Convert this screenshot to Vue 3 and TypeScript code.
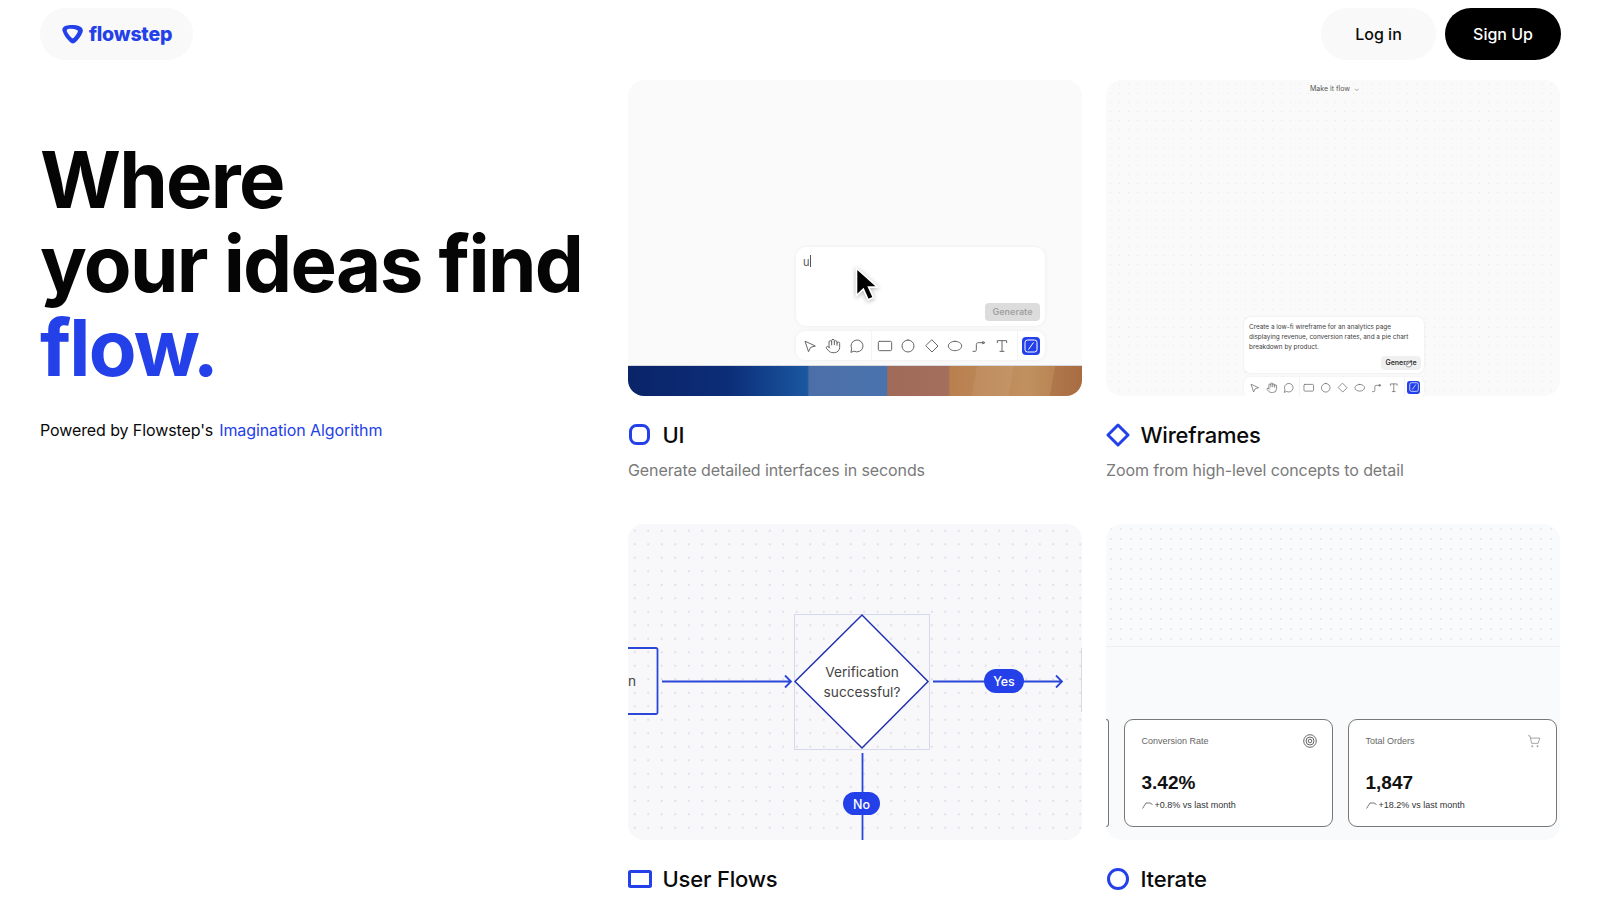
<script setup lang="ts">
const toolPaths: string[][] = [
  ["M5 5l15 7-7 2-3 6z"],
  [
    "M18 11V6a2 2 0 0 0-4 0",
    "M14 10V4a2 2 0 0 0-4 0v2",
    "M10 10.500V6a2 2 0 0 0-4 0v8",
    "M18 8a2 2 0 1 1 4 0v6a8 8 0 0 1-8 8h-2c-2.800 0-4.500-.86-6-2.340l-3.600-3.600a2 2 0 0 1 2.830-2.820L7 15",
  ],
  ["M7.900 20A9 9 0 1 0 4 16.100L3 21Z"],
];
const shapePaths: string[][] = [
  ["M4 5h16a2 2 0 0 1 2 2v10a2 2 0 0 1-2 2H4a2 2 0 0 1-2-2V7a2 2 0 0 1 2-2z"],
  ["M12 3a9 9 0 1 0 0 18a9 9 0 1 0 0-18z"],
  ["M12 3l9 9-9 9-9-9z"],
  ["M12 5c5.500 0 10 3.100 10 7s-4.500 7-10 7S2 15.900 2 12s4.500-7 10-7z"],
  ["M3 20h3c1.500 0 2-1 2-2.500V10c0-2 1-3 3-3h7", "M18 5.500l3 1.500-3 1.500z"],
  ["M5 7V4h14v3", "M12 4v16", "M9 20h6"],
];

const stats = [
  { label: "Conversion Rate", value: "3.42%", delta: "+0.8% vs last month", icon: "target" },
  { label: "Total Orders", value: "1,847", delta: "+18.2% vs last month", icon: "cart" },
];
</script>

<template>
  <div class="page">
    <header class="topbar">
      <a class="logo">
        <svg class="logo__mark" width="21" height="19" viewBox="0 0 21 19">
          <path
            fill-rule="evenodd"
            d="M4 .8C7.500-.2 14-.2 18 1.500c2.600 1.100 3.400 3.500 2.400 6-1.400 3.700-4 7.200-6.600 9.600-1.800 1.700-4 1.800-5.600.2C5 14.200 2 10.500.6 6-.2 3.500 1.300 1.500 4 .8ZM6 4c3-.6 6-.3 9 .9.900.4 1.100 1.200.7 2.100-1.100 2.400-2.600 4.500-4.200 6-.6.500-1.200.4-1.700-.1C8 11 6 9 4.900 6.400c-.4-1 0-2 1.100-2.400Z"
          />
        </svg>
        <span>flowstep</span>
      </a>
      <nav class="topbar__actions">
        <button class="btn btn_light">Log in</button>
        <button class="btn btn_dark">Sign Up</button>
      </nav>
    </header>

    <main class="layout">
      <section class="hero">
        <h1>Where<br />your ideas find<br /><em>flow.</em></h1>
        <p class="hero__sub">
          <span>Powered by Flowstep's</span>
          <a>Imagination Algorithm</a>
        </p>
      </section>

      <section class="features">
        <!-- UI -->
        <article class="feature">
          <div class="canvas canvas_ui">
            <div class="canvas__fill">
              <div class="dock">
                <div class="prompt">
                  <span class="prompt__typed">u<i></i></span>
                  <span class="prompt__btn">Generate</span>
                  <svg class="cursor" width="24" height="36" viewBox="0 0 24 36">
                    <path
                      d="M3 2v26l6.500-6 4.500 10 5-2.300-4.500-9.700h8.500z"
                      fill="#000"
                      stroke="#fff"
                      stroke-width="1.600"
                    />
                  </svg>
                </div>
                <div class="toolbar">
                  <div class="toolbar__group">
                    <span v-for="(t, i) in toolPaths" :key="i" class="tool">
                      <svg width="16" height="16" viewBox="0 0 24 24"><path v-for="d in t" :key="d" :d="d" /></svg>
                    </span>
                  </div>
                  <i class="toolbar__sep toolbar__sep_a"></i>
                  <div class="toolbar__group">
                    <span v-for="(t, i) in shapePaths" :key="i" class="tool">
                      <svg width="16" height="16" viewBox="0 0 24 24"><path v-for="d in t" :key="d" :d="d" /></svg>
                    </span>
                  </div>
                  <i class="toolbar__sep toolbar__sep_b"></i>
                  <span class="tool-active">
                    <svg width="14" height="14" viewBox="0 0 14 14">
                      <rect x="1" y="1" width="12" height="12" rx="2.500" />
                      <path d="M9.500 3.500l-5 7" />
                    </svg>
                  </span>
                </div>
              </div>
            </div>
            <div class="strip"></div>
          </div>
          <h2 class="feature__title">
            <span class="feature__icon">
              <svg width="24" height="24" viewBox="0 0 24 24">
                <rect x="2.500" y="2.500" width="18" height="18" rx="6" />
              </svg>
            </span>
            UI
          </h2>
          <p class="feature__desc">Generate detailed interfaces in seconds</p>
        </article>

        <!-- Wireframes -->
        <article class="feature">
          <div class="canvas canvas_dots canvas_wire">
            <div class="wire-top">Make it flow<span>⌄</span></div>
            <div class="dock dock_sm">
              <div class="prompt-sm">
                <p>Create a low-fi wireframe for an analytics page displaying revenue, conversion rates, and a pie chart breakdown by product.</p>
                <span class="prompt-sm__btn">Generate</span>
                <svg class="prompt-sm__hand" width="7" height="8" viewBox="0 0 24 24">
                  <path v-for="d in toolPaths[1]" :key="d" :d="d" />
                </svg>
              </div>
              <div class="toolbar toolbar_sm">
                <div class="toolbar__group">
                  <span v-for="(t, i) in toolPaths" :key="i" class="tool">
                    <svg width="16" height="16" viewBox="0 0 24 24"><path v-for="d in t" :key="d" :d="d" /></svg>
                  </span>
                </div>
                <i class="toolbar__sep toolbar__sep_a"></i>
                <div class="toolbar__group">
                  <span v-for="(t, i) in shapePaths" :key="i" class="tool">
                    <svg width="16" height="16" viewBox="0 0 24 24"><path v-for="d in t" :key="d" :d="d" /></svg>
                  </span>
                </div>
                <i class="toolbar__sep toolbar__sep_b"></i>
                <span class="tool-active">
                  <svg width="14" height="14" viewBox="0 0 14 14">
                    <rect x="1" y="1" width="12" height="12" rx="2.500" />
                    <path d="M9.500 3.500l-5 7" />
                  </svg>
                </span>
              </div>
            </div>
          </div>
          <h2 class="feature__title">
            <span class="feature__icon">
              <svg width="24" height="24" viewBox="0 0 24 24">
                <path d="M12 2l10 10-10 10L2 12z" />
              </svg>
            </span>
            Wireframes
          </h2>
          <p class="feature__desc">Zoom from high-level concepts to detail</p>
        </article>

        <!-- User Flows -->
        <article class="feature">
          <div class="canvas canvas_flow">
            <svg class="diagram" width="454" height="315" viewBox="0 0 454 315">
              <path class="edge" d="M0 123H28a1.500 1.500 0 0 1 1.500 1.500v63a1.500 1.500 0 0 1-1.500 1.500H0" />
              <text x="0" y="161" class="diagram__label">n</text>
              <path class="edge" d="M34 156.500H162M157 150.500l6 6-6 6" />
              <rect x="166.500" y="89.500" width="135" height="135" class="diagram__frame" />
              <path class="diagram__node" d="M167 156.500L234 90l66 66.500L234 223z" />
              <text x="234" y="152" text-anchor="middle" class="diagram__label">Verification</text>
              <text x="234" y="172" text-anchor="middle" class="diagram__label">successful?</text>
              <path class="edge" d="M305 156.500H434M428 150.500l6 6-6 6" />
              <rect x="356" y="144" width="40" height="24" rx="12" class="diagram__pill" />
              <text x="376" y="161" text-anchor="middle" class="diagram__pill-text">Yes</text>
              <path class="edge" d="M234.500 228V315" />
              <rect x="215" y="267" width="37" height="23" rx="11.500" class="diagram__pill" />
              <text x="233.500" y="283.500" text-anchor="middle" class="diagram__pill-text">No</text>
              <path d="M453.500 123V187" stroke="#d9d9de" stroke-width="1" />
            </svg>
          </div>
          <h2 class="feature__title">
            <span class="feature__icon">
              <svg width="24" height="24" viewBox="0 0 24 24">
                <rect x="1.500" y="4.500" width="21" height="15" rx="1" />
              </svg>
            </span>
            User Flows
          </h2>
        </article>

        <!-- Iterate -->
        <article class="feature">
          <div class="canvas canvas_iter">
            <div class="iter-top"></div>
            <div class="iter-stats">
              <div class="stat stat_stub"></div>
              <div v-for="s in stats" :key="s.label" class="stat">
                <div class="stat__head">
                  <span>{{ s.label }}</span>
                  <svg v-if="s.icon === 'target'" width="14" height="14" viewBox="0 0 14 14" class="stat__icon">
                    <circle cx="7" cy="7" r="6.300" />
                    <circle cx="7" cy="7" r="4" />
                    <circle cx="7" cy="7" r="1.800" />
                  </svg>
                  <svg v-else width="14" height="14" viewBox="0 0 24 24" class="stat__icon">
                    <path d="M2 3h3l3 13h11l3-9H6" />
                    <circle cx="9" cy="21" r="1" />
                    <circle cx="18" cy="21" r="1" />
                  </svg>
                </div>
                <div class="stat__value">{{ s.value }}</div>
                <div class="stat__delta">
                  <svg width="11" height="7" viewBox="0 0 11 7"><path d="M.5 6.500L4 1h4l2.500 1.500" /></svg>
                  {{ s.delta }}
                </div>
              </div>
            </div>
          </div>
          <h2 class="feature__title">
            <span class="feature__icon">
              <svg width="24" height="24" viewBox="0 0 24 24">
                <circle cx="12" cy="12" r="9.500" />
              </svg>
            </span>
            Iterate
          </h2>
        </article>
      </section>
    </main>
  </div>
</template>

<style>
html,
body {
  overflow: hidden;
  background: #fff;
}
</style>

<style scoped>
.page {
  --blue: #2440e8;
  box-sizing: border-box;
  width: 1600px;
  height: 900px;
  overflow: hidden;
  padding: 8px 39px 0 40px;
  font-family: Inter, "Liberation Sans", sans-serif;
  color: #0a0a0a;
}

.topbar {
  display: flex;
  justify-content: space-between;
  height: 52px;
}

.logo {
  display: flex;
  align-items: center;
  gap: 6px;
  width: 153px;
  box-sizing: border-box;
  padding-left: 22px;
  background: #f9f9f9;
  border-radius: 26px;
  color: var(--blue);
  font-size: 19.500px;
  font-weight: 800;
  letter-spacing: -0.2px;
}

.logo__mark {
  fill: var(--blue);
}

.topbar__actions {
  display: flex;
  gap: 9px;
}

.btn {
  width: 115px;
  height: 52px;
  border: 0;
  border-radius: 26px;
  font: 500 16px Inter, sans-serif;
}

.btn_light {
  background: #f9f9f9;
  color: #0a0a0a;
}

.btn_dark {
  width: 116px;
  background: #000;
  color: #fff;
}

.layout {
  display: grid;
  grid-template-columns: 588px 932px;
  margin-top: 20px;
}

.hero {
  padding-top: 58px;
}

.hero h1 {
  margin: 0;
  font-size: 78px;
  line-height: 84px;
  font-weight: 700;
  letter-spacing: -1.700px;
  color: #050505;
}

.hero h1 em {
  font-style: normal;
  color: var(--blue);
}

.hero__sub {
  display: flex;
  gap: 6px;
  margin: 28px 0 0;
  font-size: 16px;
  line-height: 24px;
  letter-spacing: -0.1px;
}

.hero__sub a {
  color: var(--blue);
}

.features {
  display: grid;
  grid-template-columns: 454px 454px;
  column-gap: 24px;
  row-gap: 42px;
  align-content: start;
}

.canvas {
  position: relative;
  display: flex;
  flex-direction: column;
  height: 316px;
  overflow: hidden;
  border-radius: 16px;
  background: #fafafa;
}

.canvas_dots {
  background-color: #fafafa;
  background-image: radial-gradient(#e8e8ea 0.7px, transparent 0.9px);
  background-size: 9px 9px;
}

.canvas__fill {
  flex: 1;
  display: flex;
  justify-content: flex-end;
  align-items: flex-end;
  padding: 0 37px 5px 0;
}

.strip {
  height: 31px;
  border-top: 1px solid #d7d9de;
  box-sizing: border-box;
  background:
    linear-gradient(
      100deg,
      transparent 76%,
      rgba(255, 255, 255, 0.06) 76%,
      rgba(255, 255, 255, 0.06) 84%,
      transparent 84%,
      transparent 93%,
      rgba(120, 50, 20, 0.16) 93%
    ),
    linear-gradient(
      90deg,
      #0a2468 0%,
      #0c2d78 22%,
      #1a57a0 39.500%,
      #4d6fa8 39.900%,
      #4a73ad 57%,
      #a06a58 57.200%,
      #a36f5c 70.500%,
      #b97f4f 71%,
      #c0915f 88%,
      #b2774a 100%
    );
}

.dock {
  display: flex;
  flex-direction: column;
  gap: 5px;
  width: 249px;
}

.prompt {
  position: relative;
  height: 79px;
  background: #fff;
  border-radius: 10px;
  box-shadow: 0 0 4px rgba(0, 0, 0, 0.06);
}

.prompt__typed {
  position: absolute;
  left: 7px;
  top: 7px;
  font-size: 11px;
  line-height: 16px;
  color: #555;
}

.prompt__typed i {
  display: inline-block;
  width: 1px;
  height: 12px;
  background: #555;
  vertical-align: -1px;
}

.prompt__btn {
  position: absolute;
  right: 5px;
  bottom: 5px;
  width: 55px;
  height: 18px;
  border-radius: 4px;
  background: #dcdcdc;
  color: #a3a3a3;
  font-size: 9px;
  font-weight: 600;
  line-height: 18px;
  text-align: center;
}

.cursor {
  position: absolute;
  left: 58px;
  top: 20px;
  transform: scale(1.06);
  filter: drop-shadow(0 1px 2px rgba(0, 0, 0, 0.3));
}

.toolbar {
  display: flex;
  align-items: center;
  box-sizing: border-box;
  height: 29px;
  padding-left: 2px;
  background: #fff;
  border-radius: 9px;
  box-shadow: 0 0 4px rgba(0, 0, 0, 0.06);
}

.toolbar_sm {
  zoom: 0.72;
  flex: none;
  padding-left: 3.500px;
}

.toolbar__group {
  display: flex;
}

.tool {
  display: flex;
  justify-content: center;
  width: 23.500px;
}

.tool svg {
  fill: none;
  stroke: #666;
  stroke-width: 1.500;
  stroke-linejoin: round;
  stroke-linecap: round;
}

.toolbar__sep {
  width: 1px;
  height: 29px;
  background: #f3f3f3;
}

.toolbar__sep_a {
  margin: 0 1.500px 0 2px;
}

.toolbar__sep_b {
  margin: 0 4px 0 2.500px;
}

.tool-active {
  display: flex;
  align-items: center;
  justify-content: center;
  width: 18px;
  height: 18px;
  border-radius: 4px;
  background: var(--blue);
}

.tool-active svg {
  fill: none;
  stroke: #fff;
  stroke-width: 1;
}

.wire-top {
  display: flex;
  gap: 4px;
  align-self: flex-start;
  margin: 5px 0 0 204px;
  font-size: 7px;
  line-height: 8px;
  color: #555;
}

.wire-top span {
  font-size: 7px;
  color: #999;
}

.dock_sm {
  position: absolute;
  left: 138px;
  top: 237px;
  width: 180px;
  gap: 4px;
}

.prompt-sm {
  position: relative;
  box-sizing: border-box;
  height: 56px;
  padding: 5px 5px 0;
  background: #fff;
  border-radius: 7px;
  box-shadow: 0 0 3px rgba(0, 0, 0, 0.08);
}

.prompt-sm p {
  margin: 0;
  font-size: 6.400px;
  line-height: 10px;
  color: #3c3c3c;
}

.prompt-sm__btn {
  position: absolute;
  right: 3px;
  bottom: 3px;
  width: 40px;
  height: 14px;
  border-radius: 4px;
  background: #f0f0f0;
  color: #333;
  font-size: 7px;
  font-weight: 600;
  line-height: 14px;
  text-align: center;
}

.prompt-sm__hand {
  position: absolute;
  right: 12px;
  bottom: 5px;
  fill: #fff;
  stroke: #555;
  stroke-width: 2;
}

.canvas_flow {
  background-color: #f8f8fb;
  background-image: radial-gradient(#dfdfe6 0.7px, transparent 0.9px);
  background-size: 13.500px 13.500px;
}

.diagram {
  display: block;
  margin-top: 1px;
}

.edge {
  fill: none;
  stroke: #2a47d8;
  stroke-width: 1.800;
}

.diagram__frame {
  fill: none;
  stroke: #d5d9ee;
}

.diagram__node {
  fill: #fff;
  stroke: #2231b0;
  stroke-width: 1.500;
}

.diagram__label {
  font-size: 13.700px;
  fill: #444;
}

.diagram__pill {
  fill: var(--blue);
}

.diagram__pill-text {
  font-size: 12.500px;
  font-weight: 500;
  fill: #fff;
}

.canvas_iter {
  background: #f9fafc;
}

.iter-top {
  flex: none;
  height: 123px;
  border-bottom: 1px solid #efeff1;
  box-sizing: border-box;
  background-image: radial-gradient(#ebebef 0.7px, transparent 0.9px);
  background-size: 10px 10px;
}

.iter-stats {
  display: flex;
  gap: 15px;
  margin-top: 72px;
  font-family: "Liberation Sans", Arial, sans-serif;
}

.stat {
  flex: none;
  box-sizing: border-box;
  width: 209px;
  height: 108px;
  padding: 14px 17px 0;
  background: #fff;
  border: 1.500px solid #777;
  border-radius: 9px;
}

.stat_stub {
  width: 2.500px;
  padding: 0;
  border-left: 0;
  border-radius: 0 9px 9px 0;
}

.stat__head {
  display: flex;
  justify-content: space-between;
  align-items: center;
  height: 14px;
  font-size: 9px;
  color: #666;
}

.stat__icon {
  fill: none;
  stroke: #666;
  stroke-width: 1;
  margin-right: -2px;
}

.stat__value {
  margin-top: 23px;
  font-size: 19px;
  line-height: 24px;
  font-weight: 700;
  color: #111;
}

.stat__delta {
  display: flex;
  align-items: center;
  gap: 2px;
  margin-top: 4px;
  font-size: 9px;
  line-height: 12px;
  color: #333;
}

.stat__delta svg {
  fill: none;
  stroke: #555;
  stroke-width: 0.800;
}

.feature__title {
  display: flex;
  align-items: center;
  height: 30px;
  margin: 24px 0 0;
  font-size: 22px;
  font-weight: 500;
  letter-spacing: -0.2px;
}

.feature__icon {
  display: flex;
  flex: none;
  width: 34.500px;
}

.feature__icon svg {
  fill: none;
  stroke: var(--blue);
  stroke-width: 3;
  stroke-linejoin: round;
}

.feature__desc {
  margin: 8px 0 0;
  font-size: 16px;
  line-height: 24px;
  letter-spacing: -0.1px;
  color: #7a7a7a;
}
</style>
